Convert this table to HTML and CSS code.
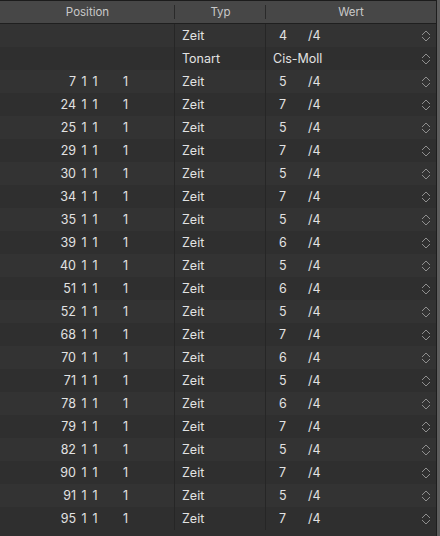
FILE: index.html
```html
<!DOCTYPE html>
<html lang="de">
<head>
<meta charset="utf-8">
<link rel="stylesheet" href="styles.css">
</head>
<body>
<div class="frame">
  <div class="table">
    <div class="head">
      <div class="hcell">Position</div>
      <div class="hcell">Typ</div>
      <div class="hcell last">Wert</div>
    </div>
    <div class="body" id="body">
      <div class="row"><div class="pos"></div><div class="typ">Zeit</div><div class="val"><span class="num">4</span><span class="den">/4</span><svg class="chev" width="10" height="12" viewBox="0 0 10 12"><path d="M1 5 L5 1 L9 5 M1 7 L5 11 L9 7" fill="none" stroke="#8e8e8e" stroke-width="1"/></svg></div></div>
      <div class="row"><div class="pos"></div><div class="typ">Tonart</div><div class="val"><span class="key">Cis-Moll</span><svg class="chev" width="10" height="12" viewBox="0 0 10 12"><path d="M1 5 L5 1 L9 5 M1 7 L5 11 L9 7" fill="none" stroke="#8e8e8e" stroke-width="1"/></svg></div></div>
    </div>
  </div>
  <div class="edge"></div>
</div>
<script src="app.js"></script>
</body>
</html>
```
FILE: app.js
```js
const data = [[7,5],[24,7],[25,5],[29,7],[30,5],[34,7],[35,5],[39,6],[40,5],[51,6],[52,5],[68,7],[70,6],[71,5],[78,6],[79,7],[82,5],[90,7],[91,5],[95,7]];
const body = document.getElementById('body');
const chev = '<svg class="chev" width="10" height="12" viewBox="0 0 10 12"><path d="M1 5 L5 1 L9 5 M1 7 L5 11 L9 7" fill="none" stroke="#8e8e8e" stroke-width="1"/></svg>';
for (const [bar, n] of data) {
  const r = document.createElement('div');
  r.className = 'row';
  r.innerHTML = '<div class="pos"><span class="bar">' + bar + '</span><span class="beat b1">1</span><span class="beat b2">1</span><span class="tick">1</span></div>' +
    '<div class="typ">Zeit</div>' +
    '<div class="val"><span class="num">' + n + '</span><span class="den">/4</span>' + chev + '</div>';
  body.appendChild(r);
}
```
FILE: styles.css
```css
html, body {
  margin: 0;
  padding: 0;
  background: #2f2f2f;
}
body {
  font-family: Inter, "Noto Sans", sans-serif;
  font-size: 12.5px;
  color: #e2e2e2;
}
.frame {
  display: flex;
  width: 440px;
  height: 536px;
  overflow: hidden;
}
.table {
  width: 436px;
  border-right: 1px solid #1e1e1e;
  background: #2f2f2f;
}
.edge {
  width: 3px;
  background: #5c5c5c;
}
.head {
  display: grid;
  grid-template-columns: 175px 91px 170px;
  height: 22px;
  background: #474747;
  border-top: 1px solid #1c1c1c;
  border-bottom: 1px solid #1f1f1f;
}
.hcell {
  display: flex;
  align-items: center;
  justify-content: center;
  font-size: 11.5px;
  color: #c9c9c9;
  position: relative;
}
.hcell::after {
  content: "";
  position: absolute;
  right: 0;
  top: 4px;
  bottom: 4px;
  width: 1px;
  background: #2a2a2a;
}
.hcell.last::after {
  display: none;
}
.body {
  display: flex;
  flex-direction: column;
}
.row {
  display: grid;
  grid-template-columns: 175px 91px 170px;
  height: 23px;
  background: #333333;
}
.row:nth-child(even) {
  background: #2f2f2f;
}
.row > div {
  display: flex;
  align-items: center;
  border-right: 1px solid #262626;
}
.row > div.val {
  border-right: none;
}
.pos .bar {
  width: 76px;
  text-align: right;
}
.pos .beat {
  width: 8px;
  text-align: center;
}
.pos .b1 {
  margin-left: 4px;
}
.pos .b2 {
  margin-left: 3px;
}
.pos .tick {
  width: 29px;
  text-align: right;
}
.typ {
  padding-left: 7px;
}
.val {
  padding-left: 13px;
  position: relative;
}
.val .num {
  width: 29px;
}
.val .key {
  margin-left: -6px;
}
.chev {
  position: absolute;
  left: 155px;
  top: 6px;
}
```
